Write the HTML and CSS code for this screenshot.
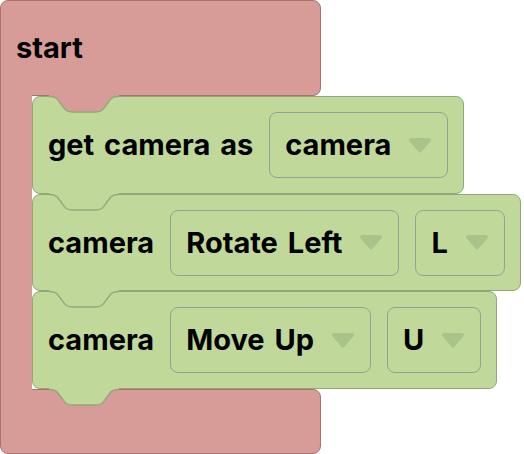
FILE: index.html
```html
<!DOCTYPE html>
<html>
<head>
<meta charset="utf-8">
<link rel="stylesheet" href="styles.css">
</head>
<body>
<div class="start">
  <div class="start-head"><span class="label">start</span></div>
  <div class="start-mouth">
    <div class="stmt">
      <svg class="notch" width="70" height="22" viewBox="0 0 70 22"><path class="fill-red" d="M0,0 H70 V2.5 H69 C65,2.5 63,3.5 61,6 L55,14 C53,17 51,18 47,18 L23,18 C19,18 17,17 15,14 L9,6 C7,3.5 5,2.5 1,2.5 H0 Z"/><path class="line" d="M0,2.5 H1 C5,2.5 7,3.5 9,6 L15,14 C17,17 19,18 23,18 L47,18 C51,18 53,17 55,14 L61,6 C63,3.5 65,2.5 69,2.5 H70"/></svg>
      <span class="label">get camera as</span>
      <div class="dropdown"><span class="value">camera</span><svg class="arrow" width="24" height="15" viewBox="0 0 24 15"><path d="M3,2 H21 L12,12.5 Z"/></svg></div>
    </div>
    <div class="stmt">
      <svg class="notch" width="70" height="22" viewBox="0 0 70 22"><path class="fill-green" d="M0,0 H70 V2.5 H69 C65,2.5 63,3.5 61,6 L55,14 C53,17 51,18 47,18 L23,18 C19,18 17,17 15,14 L9,6 C7,3.5 5,2.5 1,2.5 H0 Z"/><path class="line" d="M0,2.5 H1 C5,2.5 7,3.5 9,6 L15,14 C17,17 19,18 23,18 L47,18 C51,18 53,17 55,14 L61,6 C63,3.5 65,2.5 69,2.5 H70"/></svg>
      <span class="label">camera</span>
      <div class="dropdown"><span class="value">Rotate Left</span><svg class="arrow" width="24" height="15" viewBox="0 0 24 15"><path d="M3,2 H21 L12,12.5 Z"/></svg></div>
      <div class="dropdown"><span class="value">L</span><svg class="arrow" width="24" height="15" viewBox="0 0 24 15"><path d="M3,2 H21 L12,12.5 Z"/></svg></div>
    </div>
    <div class="stmt">
      <svg class="notch" width="70" height="22" viewBox="0 0 70 22"><path class="fill-green" d="M0,0 H70 V2.5 H69 C65,2.5 63,3.5 61,6 L55,14 C53,17 51,18 47,18 L23,18 C19,18 17,17 15,14 L9,6 C7,3.5 5,2.5 1,2.5 H0 Z"/><path class="line" d="M0,2.5 H1 C5,2.5 7,3.5 9,6 L15,14 C17,17 19,18 23,18 L47,18 C51,18 53,17 55,14 L61,6 C63,3.5 65,2.5 69,2.5 H70"/></svg>
      <span class="label">camera</span>
      <div class="dropdown"><span class="value">Move Up</span><svg class="arrow" width="24" height="15" viewBox="0 0 24 15"><path d="M3,2 H21 L12,12.5 Z"/></svg></div>
      <div class="dropdown"><span class="value">U</span><svg class="arrow" width="24" height="15" viewBox="0 0 24 15"><path d="M3,2 H21 L12,12.5 Z"/></svg></div>
      <svg class="tab" width="70" height="22" viewBox="0 0 70 22"><path class="fill-green" d="M0,0 H70 V2.5 H69 C65,2.5 63,3.5 61,6 L55,14 C53,17 51,18 47,18 L23,18 C19,18 17,17 15,14 L9,6 C7,3.5 5,2.5 1,2.5 H0 Z"/><path class="line" d="M0,2.5 H1 C5,2.5 7,3.5 9,6 L15,14 C17,17 19,18 23,18 L47,18 C51,18 53,17 55,14 L61,6 C63,3.5 65,2.5 69,2.5 H70"/></svg>
    </div>
  </div>
  <div class="start-foot"></div>
</div>
</body>
</html>
```

FILE: styles.css
```css
html, body {
  margin: 0;
  padding: 0;
  background: #ffffff;
}

body {
  width: 524px;
  height: 454px;
  overflow: hidden;
  font-family: "Inter", "Liberation Sans", sans-serif;
  font-weight: 700;
  font-size: 29px;
  color: #000000;
}

.start {
  display: flex;
  flex-direction: column;
  align-items: flex-start;
  width: 524px;
}

.start-head {
  box-sizing: border-box;
  width: 321px;
  height: 96px;
  background: #d89c98;
  border: 1px solid #a8726f;
  border-radius: 8px 8px 8px 0;
  display: flex;
  align-items: center;
  padding-left: 15px;
}

.label {
  white-space: nowrap;
  line-height: 34px;
  word-spacing: 3px;
}

/* the C-shaped spine of the "start" block, with its statements inside */
.start-mouth {
  position: relative;
  z-index: 1;
  display: flex;
  flex-direction: column;
  align-items: flex-start;
  margin: -1px 0;
  padding: 1px 0 1px 31px;
  border-left: 1px solid #a8726f;
  background-image: linear-gradient(#d89c98, #d89c98);
  background-size: 31px 100%;
  background-repeat: no-repeat;
  background-origin: padding-box;
}

.stmt {
  position: relative;
  box-sizing: border-box;
  height: 98px;
  display: flex;
  align-items: center;
  gap: 16px;
  padding: 0 15px 0 15px;
  background: #c0d99b;
  border: 1px solid #90a878;
  border-radius: 8px;
}

.stmt + .stmt {
  height: 97px;
}

.stmt:last-child {
  height: 98px;
}

.dropdown {
  box-sizing: border-box;
  height: 66px;
  display: flex;
  align-items: center;
  gap: 17px;
  padding: 0 15px;
  border: 1px solid #9b9e97;
  border-radius: 8px;
  background: #c0d99b;
}

.value {
  white-space: nowrap;
  line-height: 34px;
  word-spacing: 3px;
}

.arrow {
  display: block;
  flex: none;
}

.arrow path {
  fill: #a9c38b;
  stroke: #a9c38b;
  stroke-width: 4;
  stroke-linejoin: round;
}

.notch {
  position: absolute;
  left: 16px;
  top: -3px;
  display: block;
}

.tab {
  position: absolute;
  left: 16px;
  top: calc(100% - 1px);
  display: block;
}

.fill-red {
  fill: #d89c98;
}

.fill-green {
  fill: #c0d99b;
}

.line {
  fill: none;
  stroke: #90a878;
  stroke-width: 1.3;
}

.start-foot {
  box-sizing: border-box;
  width: 321px;
  height: 65px;
  background: #d89c98;
  border: 1px solid #a8726f;
  border-radius: 0 8px 8px 8px;
}
```
